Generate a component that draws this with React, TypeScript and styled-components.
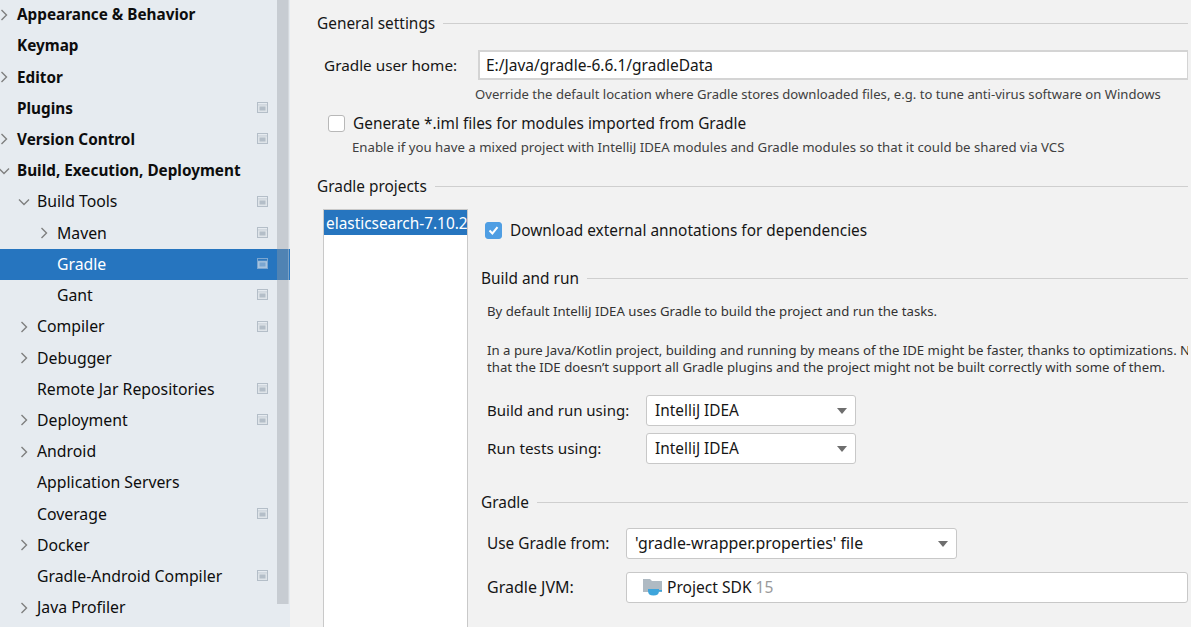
import React from "react";
import styled, { createGlobalStyle } from "styled-components";

const Global = createGlobalStyle`
  html, body { margin: 0; padding: 0; width: 1191px; height: 627px; overflow: hidden; background: #f2f2f2; }
  body { font-family: "Noto Sans", "Open Sans", sans-serif; color: #111; }
`;

const Page = styled.div`
  display: flex;
  width: 1191px;
  height: 627px;
  overflow: hidden;
`;

const Sidebar = styled.nav`
  position: relative;
  flex: 0 0 290px;
  height: 627px;
  background: #e6ebf0;
  overflow: hidden;
`;

const TreeList = styled.div`
  margin-top: -0.5px;
`;

const Row = styled.div<{ $level: number; $selected?: boolean; $bold?: boolean }>`
  position: relative;
  display: flex;
  align-items: center;
  box-sizing: border-box;
  height: 31.22px;
  padding-left: ${(p) => 17 + p.$level * 20}px;
  padding-bottom: 2px;
  font-size: ${(p) => (p.$bold ? "15.3px" : "15.8px")};
  font-weight: ${(p) => (p.$bold ? 700 : 400)};
  white-space: nowrap;
  color: ${(p) => (p.$selected ? "#ffffff" : "#0d0d0d")};
  background: ${(p) => (p.$selected ? "#2675bf" : "transparent")};
`;

const Chevron = styled.svg<{ $level: number }>`
  position: absolute;
  left: ${(p) => -3 + p.$level * 20}px;
  top: 8px;
  width: 14px;
  height: 14px;
  fill: none;
  stroke: #7f7f7f;
  stroke-width: 1.4;
`;

const ProjectBadge = styled.svg`
  position: absolute;
  left: 257px;
  top: 9px;
  width: 11px;
  height: 11px;
`;

const Scrollbar = styled.div`
  position: absolute;
  left: 277px;
  top: 0;
  width: 11px;
  height: 604px;
  background: rgba(150, 155, 160, 0.38);
  border-right: 1px solid rgba(255, 255, 255, 0.25);
`;

const Main = styled.main`
  position: relative;
  flex: 1;
  min-width: 0;
  height: 627px;
  padding: 13px 3px 0 27px;
  box-sizing: border-box;
  overflow: hidden;
  background: #f2f2f2;
`;

const SectionTitle = styled.div<{ $top?: number }>`
  display: flex;
  align-items: center;
  gap: 8px;
  height: 20px;
  margin-top: ${(p) => p.$top ?? 0}px;
  font-size: 15.4px;
  white-space: nowrap;
  color: #161616;
  &::after {
    content: "";
    flex: 1;
    height: 1px;
    background: #cfcfcf;
  }
`;

const HomeRow = styled.div`
  display: flex;
  align-items: center;
  margin-top: 17px;
  padding-left: 7px;
`;

const FieldLabel = styled.label<{ $width: number; $size?: number }>`
  flex: 0 0 ${(p) => p.$width}px;
  font-size: ${(p) => p.$size ?? 15.3}px;
  white-space: nowrap;
  color: #161616;
`;

const TextField = styled.div`
  flex: 1;
  height: 30px;
  box-sizing: border-box;
  display: flex;
  align-items: center;
  padding-left: 6px;
  border: 2px solid #d4d4d4;
  border-right-width: 1px;
  background: #fff;
  font-size: 15.5px;
  white-space: nowrap;
  color: #161616;
`;

const Hint = styled.div<{ $left: number; $top: number; $size?: number }>`
  margin-left: ${(p) => p.$left}px;
  margin-top: ${(p) => p.$top}px;
  height: 18px;
  line-height: 18px;
  font-size: ${(p) => p.$size ?? 13.1}px;
  white-space: nowrap;
  color: #404040;
`;

const CheckRow = styled.div<{ $left: number; $top: number }>`
  display: flex;
  align-items: center;
  gap: 8px;
  height: 20px;
  margin-left: ${(p) => p.$left}px;
  margin-top: ${(p) => p.$top}px;
  font-size: 15.4px;
  white-space: nowrap;
  color: #161616;
`;

const CheckBox = styled.span<{ $checked?: boolean }>`
  flex: 0 0 17px;
  width: 17px;
  height: 17px;
  box-sizing: border-box;
  display: flex;
  align-items: center;
  justify-content: center;
  border-radius: 3px;
  border: 1px solid ${(p) => (p.$checked ? "#4f9ee3" : "#b8b8b8")};
  background: ${(p) => (p.$checked ? "#4f9ee3" : "#ffffff")};
`;

const ProjectsArea = styled.div`
  display: flex;
  margin-top: 13px;
  margin-left: 6px;
  height: 420px;
`;

const ProjectList = styled.div`
  flex: 0 0 145px;
  box-sizing: border-box;
  border: 1px solid #c9c9c9;
  border-bottom: none;
  background: #fff;
  overflow: hidden;
`;

const ProjectItem = styled.div`
  height: 25px;
  line-height: 28px;
  padding-left: 2px;
  background: #2675bf;
  color: #fff;
  font-size: 15.4px;
  white-space: nowrap;
`;

const Details = styled.div`
  flex: 1;
  min-width: 0;
  padding-left: 13px;
  overflow: hidden;
`;

const BodyText = styled.div<{ $top: number }>`
  margin-top: ${(p) => p.$top}px;
  margin-left: 6px;
  height: 18.5px;
  line-height: 18.5px;
  font-size: 13.2px;
  white-space: nowrap;
  color: #333333;
`;

const FormRow = styled.div<{ $top: number }>`
  display: flex;
  align-items: center;
  margin-top: ${(p) => p.$top}px;
  margin-left: 6px;
`;

const Combo = styled.div<{ $width?: number; $size?: number }>`
  position: relative;
  box-sizing: border-box;
  ${(p) => (p.$width ? `flex: 0 0 ${p.$width}px;` : "flex: 1;")}
  height: 31px;
  display: flex;
  align-items: center;
  gap: 4px;
  padding-left: 8px;
  border: 1px solid #c8c8c8;
  border-radius: 3px;
  background: #fff;
  font-size: ${(p) => p.$size ?? 15.4}px;
  white-space: nowrap;
  color: #161616;
`;

const ComboArrow = styled.span`
  position: absolute;
  right: 8px;
  top: 12px;
  width: 0;
  height: 0;
  border-left: 5px solid transparent;
  border-right: 5px solid transparent;
  border-top: 6px solid #6e6e6e;
`;

const Version = styled.span`
  color: #9a9a9a;
`;

const SdkIcon = styled.svg`
  flex: 0 0 20px;
  width: 20px;
  height: 18px;
  margin-left: 8px;
`;

type Item = { label: string; level: number; arrow?: "r" | "d"; bold?: boolean; badge?: boolean; selected?: boolean };

const items: Item[] = [
  { label: "Appearance & Behavior", level: 0, arrow: "r", bold: true },
  { label: "Keymap", level: 0, bold: true },
  { label: "Editor", level: 0, arrow: "r", bold: true },
  { label: "Plugins", level: 0, bold: true, badge: true },
  { label: "Version Control", level: 0, arrow: "r", bold: true, badge: true },
  { label: "Build, Execution, Deployment", level: 0, arrow: "d", bold: true },
  { label: "Build Tools", level: 1, arrow: "d", badge: true },
  { label: "Maven", level: 2, arrow: "r", badge: true },
  { label: "Gradle", level: 2, badge: true, selected: true },
  { label: "Gant", level: 2, badge: true },
  { label: "Compiler", level: 1, arrow: "r", badge: true },
  { label: "Debugger", level: 1, arrow: "r" },
  { label: "Remote Jar Repositories", level: 1, badge: true },
  { label: "Deployment", level: 1, arrow: "r", badge: true },
  { label: "Android", level: 1, arrow: "r" },
  { label: "Application Servers", level: 1 },
  { label: "Coverage", level: 1, badge: true },
  { label: "Docker", level: 1, arrow: "r" },
  { label: "Gradle-Android Compiler", level: 1, badge: true },
  { label: "Java Profiler", level: 1, arrow: "r" },
];

const Badge = ({ selected }: { selected?: boolean }) => (
  <ProjectBadge viewBox="0 0 11 11">
    <rect x="0" y="0" width="11" height="11" fill={selected ? "#7ba6d0" : "#b4bec8"} />
    <rect x="1" y="1" width="9" height="1.6" fill={selected ? "#2f78bd" : "#e6ebf0"} />
    <rect x="1" y="3.2" width="9" height="6.8" fill={selected ? "#a9c4de" : "#dfe4e9"} />
    <rect x="2.5" y="4.5" width="6" height="4" fill={selected ? "#7ba6d0" : "#b4bec8"} />
  </ProjectBadge>
);

export default function App() {
  return (
    <Page>
      <Global />
      <Sidebar>
        <TreeList>
          {items.map((it) => (
            <Row key={it.label} $level={it.level} $bold={it.bold} $selected={it.selected}>
              {it.arrow && (
                <Chevron $level={it.level} viewBox="0 0 14 14">
                  <path d={it.arrow === "r" ? "M4.5 2 L9.5 7 L4.5 12" : "M2 4.5 L7 9.5 L12 4.5"} />
                </Chevron>
              )}
              {it.label}
              {it.badge && <Badge selected={it.selected} />}
            </Row>
          ))}
        </TreeList>
        <Scrollbar />
      </Sidebar>
      <Main>
        <SectionTitle>General settings</SectionTitle>
        <HomeRow>
          <FieldLabel $width={154}>Gradle user home:</FieldLabel>
          <TextField>E:/Java/gradle-6.6.1/gradleData</TextField>
        </HomeRow>
        <Hint $left={158} $top={5}>Override the default location where Gradle stores downloaded files, e.g. to tune anti-virus software on Windows</Hint>
        <CheckRow $left={11} $top={10}>
          <CheckBox />
          Generate *.iml files for modules imported from Gradle
        </CheckRow>
        <Hint $left={35} $top={5} $size={13.22}>Enable if you have a mixed project with IntelliJ IDEA modules and Gradle modules so that it could be shared via VCS</Hint>
        <SectionTitle $top={20}>Gradle projects</SectionTitle>
        <ProjectsArea>
          <ProjectList>
            <ProjectItem>elasticsearch-7.10.2</ProjectItem>
          </ProjectList>
          <Details>
            <CheckRow $left={4} $top={11}>
              <CheckBox $checked>
                <svg width="11" height="11" viewBox="0 0 11 11" fill="none" stroke="#fff" strokeWidth="2">
                  <path d="M1.5 5.5 L4.4 8.4 L9.5 2.2" />
                </svg>
              </CheckBox>
              Download external annotations for dependencies
            </CheckRow>
            <SectionTitle $top={28}>Build and run</SectionTitle>
            <BodyText $top={14}>By default IntelliJ IDEA uses Gradle to build the project and run the tasks.</BodyText>
            <BodyText $top={20}>In a pure Java/Kotlin project, building and running by means of the IDE might be faster, thanks to optimizations. Note</BodyText>
            <BodyText $top={-1}>that the IDE doesn’t support all Gradle plugins and the project might not be built correctly with some of them.</BodyText>
            <FormRow $top={18}>
              <FieldLabel $width={159} $size={15}>Build and run using:</FieldLabel>
              <Combo $width={210}>IntelliJ IDEA<ComboArrow /></Combo>
            </FormRow>
            <FormRow $top={7}>
              <FieldLabel $width={159}>Run tests using:</FieldLabel>
              <Combo $width={210}>IntelliJ IDEA<ComboArrow /></Combo>
            </FormRow>
            <SectionTitle $top={29}>Gradle</SectionTitle>
            <FormRow $top={15}>
              <FieldLabel $width={139} $size={15.4}>Use Gradle from:</FieldLabel>
              <Combo $width={331} $size={15.9}>'gradle-wrapper.properties' file<ComboArrow /></Combo>
            </FormRow>
            <FormRow $top={13}>
              <FieldLabel $width={139} $size={16}>Gradle JVM:</FieldLabel>
              <Combo $size={15.6}>
                <SdkIcon viewBox="0 0 20 18">
                  <path d="M0 1 H7 L9 3 H19 V14 H0 Z" fill="#afbac3" />
                  <path d="M5 11 H16 V13 Q16 17.5 10.5 17.5 Q5 17.5 5 13 Z" fill="#3ea5dc" />
                  <rect x="16" y="12" width="3" height="1.6" fill="#3ea5dc" />
                </SdkIcon>
                Project SDK <Version>15</Version>
              </Combo>
            </FormRow>
          </Details>
        </ProjectsArea>
      </Main>
    </Page>
  );
}
